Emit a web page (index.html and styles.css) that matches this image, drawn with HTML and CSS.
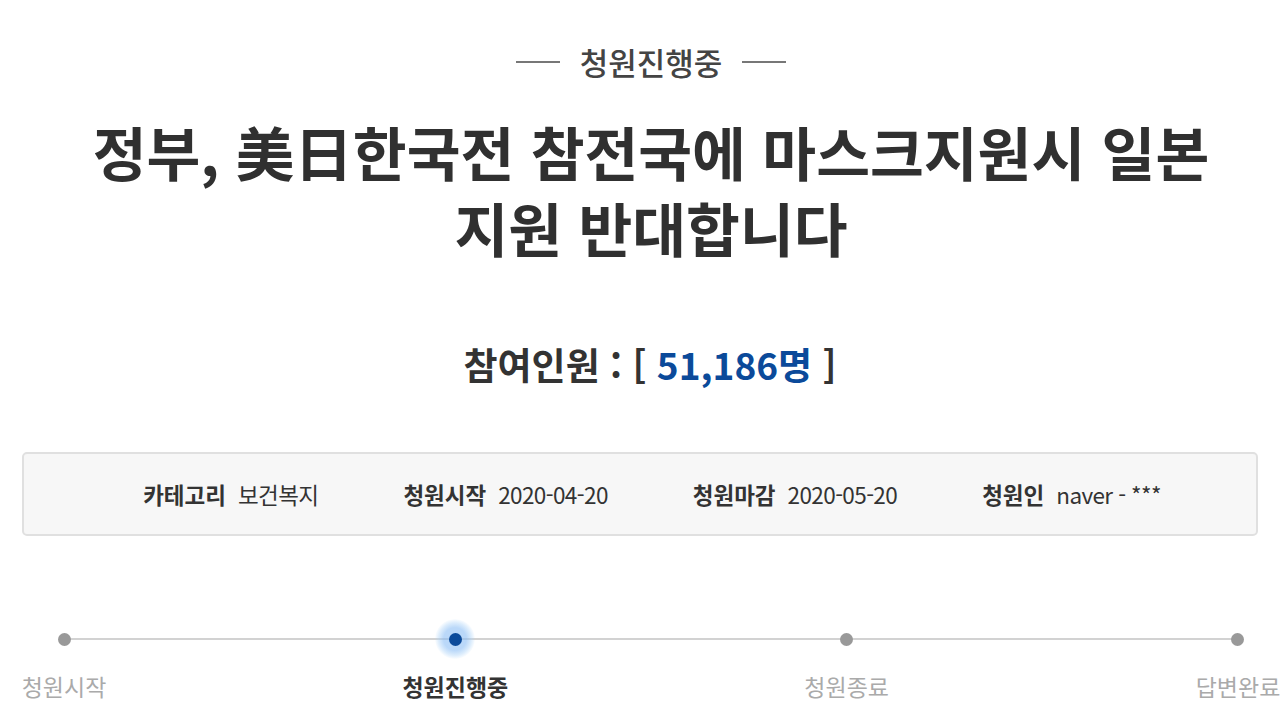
FILE: index.html
```html
<!DOCTYPE html>
<html lang="ko">
<head>
<meta charset="utf-8">
<link rel="stylesheet" href="styles.css">
</head>
<body>
<main class="page">
  <div class="status"><span class="dash"></span><span class="status-text">청원진행중</span><span class="dash"></span></div>
  <h1 class="title"><span class="title-line">정부, 美日한국전 참전국에 마스크지원시 일본</span><span class="title-line">지원 반대합니다</span></h1>
  <p class="count">참여인원 : [ <span class="num">51,186명</span> ]</p>
  <ul class="info">
    <li><strong>카테고리</strong><span>보건복지</span></li>
    <li><strong>청원시작</strong><span>2020-04-20</span></li>
    <li><strong>청원마감</strong><span>2020-05-20</span></li>
    <li><strong>청원인</strong><span>naver - ***</span></li>
  </ul>
  <ol class="steps">
    <li class="step"><span class="dot"></span><span class="label">청원시작</span></li>
    <li class="step active"><span class="dot"></span><span class="label">청원진행중</span></li>
    <li class="step"><span class="dot"></span><span class="label">청원종료</span></li>
    <li class="step"><span class="dot"></span><span class="label">답변완료</span></li>
  </ol>
</main>
</body>
</html>
```

FILE: styles.css
```css
* { box-sizing: border-box; }
html, body { margin: 0; padding: 0; background: #fff; }
body {
  font-family: "Noto Sans CJK KR", "Noto Sans", sans-serif;
  color: #333;
  width: 1280px;
  height: 720px;
  overflow: hidden;
}
.page { padding-top: 42px; }

.status {
  display: flex;
  justify-content: center;
  align-items: center;
  gap: 20px;
  height: 40px;
  padding-left: 22px;
}
.status-text {
  font-size: 31px;
  line-height: 40px;
  color: #444;
  font-weight: 500;
}
.dash {
  width: 44px;
  height: 2px;
  background: #777;
}

.title {
  margin: 31px 0 0;
  padding-left: 22px;
  display: flex;
  flex-direction: column;
  align-items: center;
  font-size: 58.5px;
  font-weight: 700;
  color: #303030;
}
.title-line {
  display: block;
  height: 76px;
  line-height: 76px;
  white-space: nowrap;
}

.count {
  margin: 74px 0 0;
  padding-left: 20px;
  text-align: center;
  font-size: 37px;
  line-height: 50px;
  font-weight: 700;
  color: #333;
}
.count .num { color: #0b4a9a; }

.info {
  list-style: none;
  margin: 63px 22px 0;
  padding: 0;
  height: 84px;
  background: #f7f7f7;
  border: 2px solid #e0e0e0;
  border-radius: 5px;
  display: flex;
  justify-content: center;
  align-items: center;
  gap: 85px;
  padding-left: 24px;
}
.info li {
  display: flex;
  align-items: baseline;
  gap: 12px;
  font-size: 22.5px;
  color: #333;
}
.info strong { font-weight: 700; }
.info span { letter-spacing: -0.6px; font-weight: 400; }

.steps {
  list-style: none;
  margin: 83px 0 0;
  padding: 0 0 0 22px;
  display: flex;
  justify-content: space-between;
  position: relative;
}
.steps::before {
  content: "";
  position: absolute;
  left: 63px;
  right: 42px;
  top: 19px;
  height: 2px;
  background: #d2d2d2;
}
.step {
  display: flex;
  flex-direction: column;
  align-items: center;
  width: 84px;
  position: relative;
}
.dot {
  width: 40px;
  height: 40px;
  display: flex;
  align-items: center;
  justify-content: center;
  border-radius: 50%;
}
.dot::after {
  content: "";
  width: 13px;
  height: 13px;
  border-radius: 50%;
  background: #999;
}
.step.active .dot {
  background: radial-gradient(circle, rgba(140,190,245,0.6) 0 40%, rgba(170,210,248,0.4) 58%, rgba(255,255,255,0) 72%);
}
.step.active .dot::after { background: #0b4a9a; }
.label {
  margin-top: 12px;
  font-size: 23px;
  line-height: 30px;
  color: #aaa;
  white-space: nowrap;
}
.step.active .label { color: #333; font-weight: 700; }
```
